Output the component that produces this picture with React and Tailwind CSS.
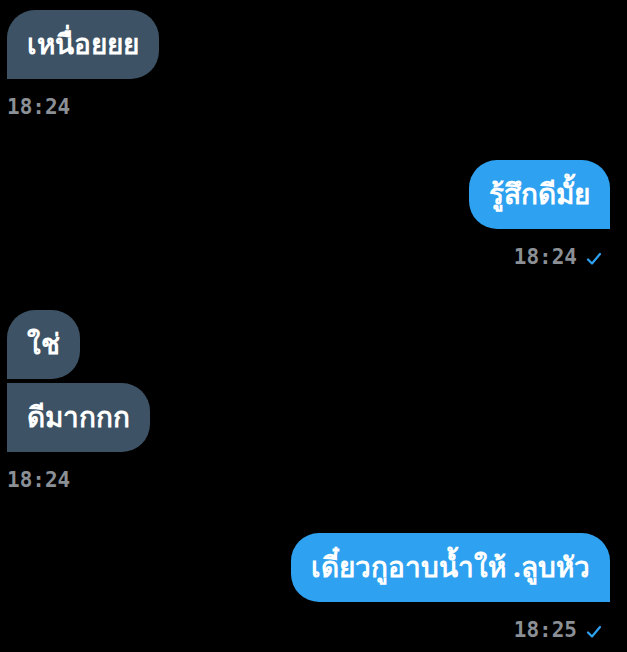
import React from 'react';

const Check = () => (
  <svg width="18" height="18" viewBox="0 0 18 18" className="ml-[8px] mt-[2px]">
    <path d="M3 9.5 L7 13.5 L15 4" fill="none" stroke="#2ea1f0" strokeWidth="2.2" strokeLinecap="round" strokeLinejoin="round" />
  </svg>
);

const Bubble = ({ text, mine, className = '' }) => (
  <div
    className={`h-[69px] flex items-center px-5 text-white font-bold text-[28px] leading-none ${
      mine ? 'bg-[#2ea1f0] rounded-[28px] rounded-br-none' : 'bg-[#3d5264] rounded-[28px] rounded-bl-none'
    } ${className}`}
  >
    <span className="-mt-1">{text}</span>
  </div>
);

const Time = ({ value, mine }) => (
  <div className={`flex items-center text-[#8b9096] text-[21px] leading-none ${mine ? 'justify-end pr-[17px]' : ''}`}>
    <span className="font-['DejaVu_Sans_Mono',monospace] font-semibold">{value}</span>
    {mine && <Check />}
  </div>
);

export default function App() {
  return (
    <div className="w-[627px] h-[652px] bg-black overflow-hidden font-['Noto_Sans','DejaVu_Sans',sans-serif]">
      <div className="px-[7px] pt-[10px]">
        <div className="flex">
          <Bubble text="เหนื่อยยย" />
        </div>
        <div className="mt-[18px]">
          <Time value="18:24" />
        </div>

        <div className="flex justify-end pr-[10px] mt-[42px]">
          <Bubble text="รู้สึกดีมั้ย" mine />
        </div>
        <div className="mt-[18px]">
          <Time value="18:24" mine />
        </div>

        <div className="flex mt-[42px]">
          <Bubble text="ใช่" />
        </div>
        <div className="flex mt-[4px]">
          <Bubble text="ดีมากกก" className="rounded-tl-none" />
        </div>
        <div className="mt-[18px]">
          <Time value="18:24" />
        </div>

        <div className="flex justify-end pr-[10px] mt-[42px]">
          <Bubble text="เดี๋ยวกูอาบน้ำให้ .ลูบหัว" mine />
        </div>
        <div className="mt-[18px]">
          <Time value="18:25" mine />
        </div>
      </div>
    </div>
  );
}
